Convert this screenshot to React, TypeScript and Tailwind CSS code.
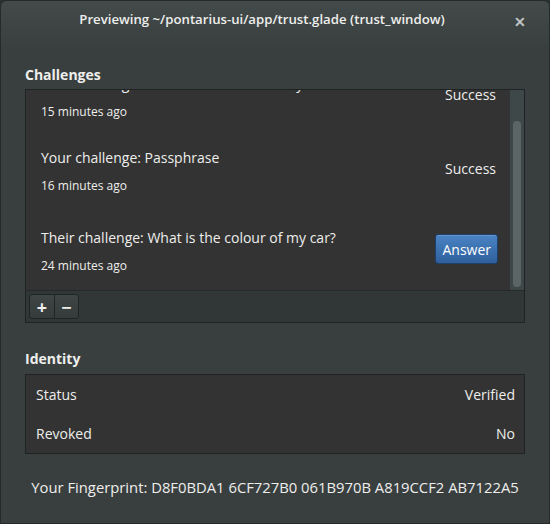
import React from 'react'

const challenges = [
  { title: 'Your challenge: What is the colour of my car?', when: '15 minutes ago', state: 'Success' },
  { title: 'Your challenge: Passphrase', when: '16 minutes ago', state: 'Success' },
  { title: 'Their challenge: What is the colour of my car?', when: '24 minutes ago', state: 'answer' },
]

function ChallengeRow({ title, when, state }: { title: string; when: string; state: string }) {
  const isAnswer = state === 'answer'
  return (
    <div className={`flex items-center justify-between pl-[15px] pr-[14px] ${isAnswer ? 'h-[86px]' : 'h-[74px]'}`}>
      <div className="mt-[2px] flex flex-col gap-[10px]">
        <span className="text-[14px] leading-[20px] text-[#eeeeec]">{title}</span>
        <span className="text-[12px] leading-[16px] text-[#eeeeec]">{when}</span>
      </div>
      {isAnswer ? (
        <button className="mt-[-2px] mr-[-2px] h-[30px] px-[6px] rounded-[3px] border border-[#1c3f6e] bg-gradient-to-b from-[#4a84c4] to-[#2f5f9c] text-[14px] text-white shadow-[inset_0_1px_0_rgba(255,255,255,0.15)]">
          Answer
        </button>
      ) : (
        <span className="mt-[-4px] text-[14px] text-[#eeeeec]">{state}</span>
      )}
    </div>
  )
}

export default function App() {
  return (
    <div
      className="w-[550px] h-[524px] bg-[#2b2f30] text-[#eeeeec]"
      style={{ fontFamily: '"Open Sans", "Noto Sans", sans-serif' }}
    >
      <div className="w-full h-full flex flex-col rounded-t-[6px] bg-[#393f3f] border border-[#262a2b]">
        {/* Header bar */}
        <div className="relative h-[44px] flex items-center justify-center pr-[26px] rounded-t-[6px] bg-gradient-to-b from-[#434a4a] to-[#3a4040]">
          <span className="text-[13.2px] font-semibold text-[#eeeeec] mt-[-6px]">
            Previewing ~/pontarius-ui/app/trust.glade (trust_window)
          </span>
          <span className="absolute right-[23px] top-[10px] text-[14px] font-bold text-[#c0c4c4]">✕</span>
        </div>

        <div className="flex flex-col px-[24px]">
          {/* Challenges */}
          <div className="mt-[20px] text-[14px] font-bold leading-[20px]">Challenges</div>
          <div className="mt-[4px] border border-[#1f2323] flex flex-col">
            <div className="flex h-[200px] bg-[#333333]">
              <div className="flex-1 overflow-hidden">
                <div className="-mt-[31px] flex flex-col">
                  {challenges.map((c) => (
                    <ChallengeRow key={c.when} {...c} />
                  ))}
                </div>
              </div>
              <div className="w-[14px] bg-[#3f4848] flex flex-col items-center pt-[31px] pb-[3px]">
                <div className="w-[8px] flex-1 rounded-full bg-[#5b6565]" />
              </div>
            </div>
            <div className="h-[32px] bg-[#313737] border-t border-[#262a2a] flex items-center px-[3px]">
              <div className="flex h-[25px] rounded-[3px] border border-[#1f2424] bg-gradient-to-b from-[#3e4545] to-[#353b3b]">
                <span className="w-[24px] flex items-center justify-center text-[18px] font-bold leading-none">+</span>
                <span className="w-[24px] flex items-center justify-center text-[18px] font-bold leading-none border-l border-[#1f2424]">−</span>
              </div>
            </div>
          </div>

          {/* Identity */}
          <div className="mt-[26px] text-[14px] font-bold leading-[20px]">Identity</div>
          <div className="mt-[5px] border border-[#1f2323] bg-[#333333] flex flex-col">
            <div className="h-[39px] flex items-center justify-between pl-[10px] pr-[9px] text-[14px]">
              <span>Status</span>
              <span>Verified</span>
            </div>
            <div className="h-[39px] flex items-center justify-between pl-[10px] pr-[9px] text-[14px]">
              <span>Revoked</span>
              <span>No</span>
            </div>
          </div>

          <div className="mt-[22px] text-center text-[14.8px]">
            Your Fingerprint: D8F0BDA1 6CF727B0 061B970B A819CCF2 AB7122A5
          </div>
        </div>
      </div>
    </div>
  )
}
